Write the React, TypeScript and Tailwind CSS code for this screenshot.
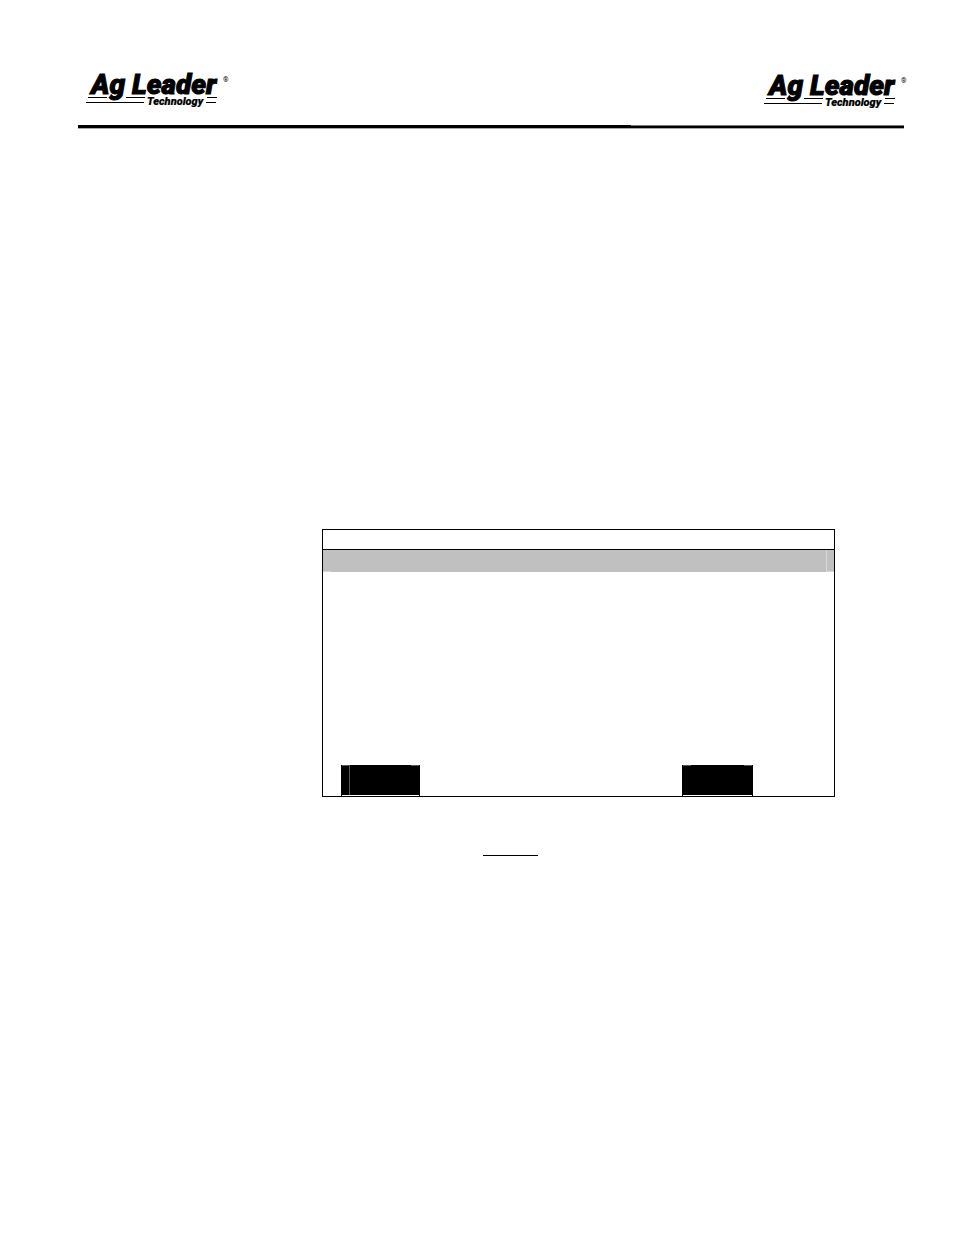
function Logo() {
  return (
    <svg
      width="145"
      height="50"
      viewBox="0 -10 145 50"
      role="img"
      aria-label="Ag Leader Technology"
      className="font-[Roboto,sans-serif] italic"
    >
      <text x="6" y="24" fontSize="28" fontWeight="900" stroke="#000" strokeWidth="1">
        Ag Leader
      </text>
      <text x="138" y="12" fontSize="7" className="not-italic">
        ®
      </text>
      <path d="M3 27.5H22M41 27.5H60M122 27.5H132M1 32.5H59M121 32.5H131" stroke="#000" strokeWidth="1" />
      <text x="62" y="35" fontSize="11" fontWeight="900" stroke="#000" strokeWidth="0.2">
        Technology
      </text>
    </svg>
  )
}

function SoftKey({ className, divider = false }: { className: string; divider?: boolean }) {
  return (
    <div className={`h-[31px] border-x border-black ${className}`}>
      <div className="flex h-[30px] flex-col bg-black">
        <div className="flex justify-between">
          <div className="h-px w-2 bg-[#555]" />
          <div className="h-px w-2 bg-[#555]" />
        </div>
        {divider && <div className="ml-[7px] w-px flex-1 bg-[#555]" />}
      </div>
    </div>
  )
}

export default function App() {
  return (
    <div className="min-h-screen bg-white text-black">
      <header className="pt-[60px] pr-[46px] pl-[78px]">
        <div className="flex justify-between pl-[7px]">
          <Logo />
          <div className="pt-px">
            <Logo />
          </div>
        </div>

        {/* Header rule, slightly thinner on the right part */}
        <div className="mt-[14px] mr-1 flex h-1 border-b border-[#aaa]">
          <div className="w-[67%] bg-black" />
          <div className="flex-1 border-t border-[#777] bg-black" />
        </div>
      </header>

      <main className="pt-[400px] pr-[119px] pb-16 pl-[322px]">
        {/* Console screen */}
        <section className="flex h-[268px] flex-col border border-black">
          <div className="h-5 border-b border-black" />
          <div className="flex h-[22px] bg-[#c0c0c0]">
            <div className="w-2 border-b border-[#d8d8d8]" />
            <div className="flex-1" />
            <div className="w-2 border-b border-l border-[#d8d8d8]" />
          </div>
          <div className="mt-auto flex justify-between pr-[81px] pl-[18px]">
            <SoftKey className="w-[79px]" divider />
            <SoftKey className="w-[71px]" />
          </div>
        </section>

        <div className="mt-[58px] ml-[161px] w-[55px] border-t border-black" />
      </main>
    </div>
  )
}
